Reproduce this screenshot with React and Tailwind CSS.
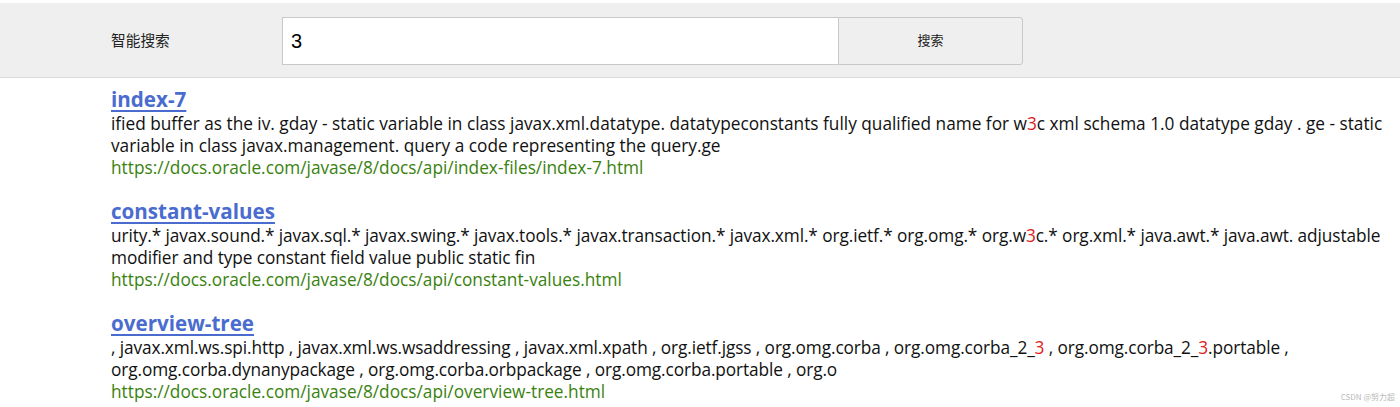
import React from "react";

const font = { fontFamily: '"Open Sans", "Noto Sans CJK SC", sans-serif' };

function Hl({ children }) {
  return <span className="text-[#e02020]">{children}</span>;
}

const results = [
  {
    title: "index-7",
    track: "tracking-normal",
    lines: [
      <>ified buffer as the iv. gday - static variable in class javax.xml.datatype. datatypeconstants fully qualified name for w<Hl>3</Hl>c xml schema 1.0 datatype gday . ge - static</>,
      <>variable in class javax.management. query a code representing the query.ge</>,
    ],
    url: "https://docs.oracle.com/javase/8/docs/api/index-files/index-7.html",
  },
  {
    title: "constant-values",
    track: "tracking-[-0.09px]",
    lines: [
      <>urity.* javax.sound.* javax.sql.* javax.swing.* javax.tools.* javax.transaction.* javax.xml.* org.ietf.* org.omg.* org.w<Hl>3</Hl>c.* org.xml.* java.awt.* java.awt. adjustable</>,
      <>modifier and type constant field value public static fin</>,
    ],
    url: "https://docs.oracle.com/javase/8/docs/api/constant-values.html",
  },
  {
    title: "overview-tree",
    track: "tracking-[-0.1px]",
    lines: [
      <>, javax.xml.ws.spi.http , javax.xml.ws.wsaddressing , javax.xml.xpath , org.ietf.jgss , org.omg.corba , org.omg.corba_2_<Hl>3</Hl> , org.omg.corba_2_<Hl>3</Hl>.portable ,</>,
      <>org.omg.corba.dynanypackage , org.omg.corba.orbpackage , org.omg.corba.portable , org.o</>,
    ],
    url: "https://docs.oracle.com/javase/8/docs/api/overview-tree.html",
  },
];

export default function App() {
  return (
    <div className="relative w-[1400px] h-[407px] bg-white overflow-hidden" style={font}>
      <div className="mt-[3px] h-[75px] bg-[#efefef] border-b border-[#dcdcdc] flex items-center">
        <div className="w-[282px] pl-[111px] text-[14.7px] text-[#222]">智能搜索</div>
        <div className="flex h-[48px] mt-[2px]">
          <div className="w-[556px] h-full bg-white border border-[#c8c8c8] border-r-0 flex items-center pl-[8px] text-[20px] text-black" style={{ fontFamily: '"Liberation Sans", sans-serif' }}>
            3
          </div>
          <div className="w-[185px] h-full bg-[#efefef] border border-[#c8c8c8] rounded-r-[3px] flex items-center justify-center text-[13px] text-[#222]">
            搜索
          </div>
        </div>
      </div>
      <div className="pl-[111px] pt-[7px] flex flex-col gap-[19px]">
        {results.map((r) => (
          <div key={r.title}>
            <div className="text-[20.6px] leading-[28px] font-bold text-[#4a6ccf] underline underline-offset-[3px] decoration-[2px]">
              {r.title}
            </div>
            {r.lines.map((l, i) => (
              <div key={i} className={`text-[17.25px] leading-[22px] text-[#111] whitespace-nowrap ${r.track}`}>
                {l}
              </div>
            ))}
            <div className="text-[17.25px] leading-[21px] text-[#3a820f] whitespace-nowrap">{r.url}</div>
          </div>
        ))}
      </div>
      <div className="absolute right-[5px] bottom-[4px] text-[8px] text-[#bbb]" style={{ fontFamily: '"Noto Sans CJK SC", sans-serif' }}>
        CSDN @努力超
      </div>
    </div>
  );
}
